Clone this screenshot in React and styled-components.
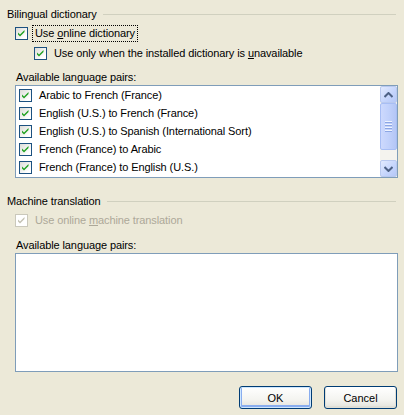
import styled, { createGlobalStyle } from "styled-components";

const GlobalStyle = createGlobalStyle`
  html, body {
    margin: 0;
    padding: 0;
    background: #ece9d8;
  }
  body {
    font-family: "Liberation Sans", Arial, sans-serif;
    font-size: 11px;
    letter-spacing: -0.1px;
    color: #000;
  }
`;

const pairs = [
  "Arabic to French (France)",
  "English (U.S.) to French (France)",
  "English (U.S.) to Spanish (International Sort)",
  "French (France) to Arabic",
  "French (France) to English (U.S.)",
];

const Check = ({ checked = true, disabled = false }) => (
  <Box $disabled={disabled}>
    {checked && (
      <svg width="11" height="11" viewBox="0 0 11 11">
        <path
          d="M2 4.5 L4 6.5 L8.5 2 L8.5 4 L4 8.5 L2 6.5 Z"
          fill={disabled ? "#c4c2b4" : "#21a121"}
        />
      </svg>
    )}
  </Box>
);

const Arrow = ({ up }) => (
  <svg width="9" height="6" viewBox="0 0 9 6">
    <path
      d={up ? "M0.5 5 L4.5 1 L8.5 5" : "M0.5 1 L4.5 5 L8.5 1"}
      fill="none"
      stroke="#4d6185"
      strokeWidth="2"
    />
  </svg>
);

const App = () => {
  return (
    <>
      <GlobalStyle />
      <Dialog>
        <GroupHeader>
          <span>Bilingual dictionary</span>
          <Rule />
        </GroupHeader>
        <CheckRow $indent={15}>
          <Check />
          <Label $focused>
            Use <u>o</u>nline dictionary
          </Label>
        </CheckRow>
        <CheckRow $indent={34} $top={2}>
          <Check />
          <Label>
            Use only when the installed dictionary is <u>u</u>navailable
          </Label>
        </CheckRow>
        <Caption>Available language pairs:</Caption>
        <ListBox $height={93}>
          <Items>
            {pairs.map((p) => (
              <Item key={p}>
                <Check />
                <span>{p}</span>
              </Item>
            ))}
          </Items>
          <ScrollBar>
            <ScrollButton>
              <Arrow up />
            </ScrollButton>
            <Thumb>
              <Grip />
              <Grip />
              <Grip />
              <Grip />
            </Thumb>
            <Track />
            <ScrollButton>
              <Arrow />
            </ScrollButton>
          </ScrollBar>
        </ListBox>

        <GroupHeader $top={15}>
          <span>Machine translation</span>
          <Rule />
        </GroupHeader>
        <CheckRow $indent={15} $disabled>
          <Check disabled />
          <Label>
            Use online <u>m</u>achine translation
          </Label>
        </CheckRow>
        <Caption $top={9}>Available language pairs:</Caption>
        <ListBox $height={119} />

        <Buttons>
          <Button $default>OK</Button>
          <Button>Cancel</Button>
        </Buttons>
      </Dialog>
    </>
  );
};

const Dialog = styled.div`
  width: 404px;
  height: 415px;
  box-sizing: border-box;
  padding: 6px 6px 0 7px;
  display: flex;
  flex-direction: column;
`;

const GroupHeader = styled.div`
  display: flex;
  align-items: center;
  height: 15px;
  gap: 6px;
  margin-top: ${(p) => p.$top || 0}px;
  margin-right: 2px;
`;

const Rule = styled.div`
  flex: 1;
  border-top: 1px solid #d0d0bf;
  margin-top: 1px;
`;

const CheckRow = styled.div`
  display: flex;
  align-items: center;
  height: 18px;
  padding-left: ${(p) => p.$indent - 7}px;
  gap: 5px;
  margin-top: ${(p) => (p.$top !== undefined ? p.$top : 3)}px;
  color: ${(p) => (p.$disabled ? "#aca899" : "#000")};
`;

const Box = styled.span`
  width: 11px;
  height: 11px;
  flex: none;
  display: flex;
  align-items: center;
  justify-content: center;
  border: 1px solid ${(p) => (p.$disabled ? "#cac8bb" : "#1c5180")};
  background: ${(p) =>
    p.$disabled ? "#fff" : "linear-gradient(135deg, #dcdcd7 0%, #fff 80%)"};
`;

const Label = styled.span`
  padding: 1px 2px;
  outline: ${(p) => (p.$focused ? "1px dotted #000" : "none")};
  outline-offset: 0;
  line-height: 13px;
`;

const Caption = styled.div`
  height: 15px;
  line-height: 15px;
  padding-left: 9px;
  margin-top: ${(p) => (p.$top !== undefined ? p.$top : 8)}px;
`;

const ListBox = styled.div`
  margin-left: 8px;
  height: ${(p) => p.$height}px;
  box-sizing: border-box;
  border: 1px solid #7f9db9;
  background: #fff;
  display: flex;
`;

const Items = styled.div`
  flex: 1;
  display: flex;
  flex-direction: column;
`;

const Item = styled.div`
  height: 18px;
  display: flex;
  align-items: center;
  padding-left: 3px;
  gap: 7px;
`;

const ScrollBar = styled.div`
  width: 17px;
  display: flex;
  flex-direction: column;
  background: #f4f3ee;
`;

const ScrollButton = styled.div`
  height: 17px;
  box-sizing: border-box;
  border: 1px solid #b9c9ef;
  border-radius: 2px;
  background: linear-gradient(135deg, #e2eafe 0%, #c4d4fc 60%, #b6c8f7 100%);
  display: flex;
  align-items: center;
  justify-content: center;
`;

const Thumb = styled.div`
  height: 47px;
  box-sizing: border-box;
  border: 1px solid #a8bef4;
  border-radius: 2px;
  background: linear-gradient(90deg, #cdd9fd 0%, #c1d1fb 50%, #b4c6f6 100%);
  display: flex;
  flex-direction: column;
  align-items: center;
  justify-content: center;
  gap: 1px;
`;

const Grip = styled.div`
  width: 7px;
  height: 1px;
  background: #eef3fe;
  border-bottom: 1px solid #8ca6e4;
`;

const Track = styled.div`
  flex: 1;
`;

const Buttons = styled.div`
  display: flex;
  justify-content: flex-end;
  gap: 12px;
  margin-top: 14px;
  margin-right: 1px;
`;

const Button = styled.button`
  width: 73px;
  height: 23px;
  font-family: inherit;
  font-size: 11px;
  color: #000;
  border: 1px solid #003c74;
  border-radius: 3px;
  background: linear-gradient(180deg, #fff 0%, #f4f4f0 60%, #e3e2da 100%);
  box-shadow: ${(p) =>
    p.$default
      ? "inset 0 0 0 1px #cee7ff, inset 0 -1px 0 2px #89adef"
      : "inset 0 -1px 0 1px #e0dfd6"};
  padding: 0;
`;

export default App;
